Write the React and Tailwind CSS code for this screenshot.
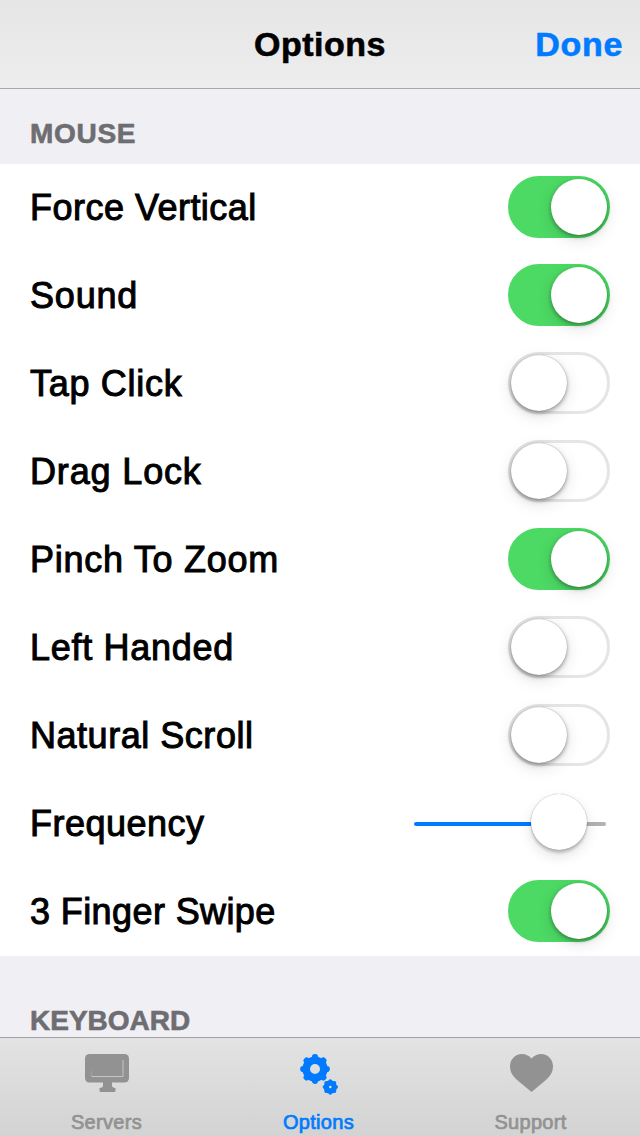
import { useState } from 'react';

const OPTIONS = [
  { id: 'forceVertical', label: 'Force Vertical', type: 'switch', tracking: 'tracking-[0.48px]' },
  { id: 'sound', label: 'Sound', type: 'switch', tracking: 'tracking-[0.8px]' },
  { id: 'tapClick', label: 'Tap Click', type: 'switch', tracking: 'tracking-[0.7px]' },
  { id: 'dragLock', label: 'Drag Lock', type: 'switch', tracking: 'tracking-[0.85px]' },
  { id: 'pinchToZoom', label: 'Pinch To Zoom', type: 'switch', tracking: 'tracking-[0.73px]' },
  { id: 'leftHanded', label: 'Left Handed', type: 'switch', tracking: 'tracking-[0.7px]' },
  { id: 'naturalScroll', label: 'Natural Scroll', type: 'switch', tracking: 'tracking-[0.53px]' },
  { id: 'frequency', label: 'Frequency', type: 'slider', tracking: 'tracking-[0.5px]' },
  { id: 'threeFingerSwipe', label: '3 Finger Swipe', type: 'switch', tracking: 'tracking-[0.4px]' },
];

const TEETH = [0, 45, 90, 135, 180, 225, 270, 315];

const MonitorIcon = () => (
  <svg width="44" height="38" viewBox="0 0 44 38" fill="currentColor">
    <rect width="44" height="28.5" rx="4.5" />
    <path d="M18 28h9v3.5q0 2 3.5 2.5v2.5q0 1.5-1.5 1.5H16q-1.500 0-1.500-1.500V34q3.500-.500 3.500-2.500z" />
    <path d="M6.500 17v5.500" fill="none" stroke="#a2a2a2" />
    <path d="M6.500 22.500H38V6" fill="none" stroke="#c4c4c4" />
  </svg>
);

const GearsIcon = () => (
  <svg width="40" height="42" viewBox="0 0 40 42" stroke="currentColor" fill="none" strokeLinecap="round">
    <circle cx="16" cy="15" r="8.800" strokeWidth="7.600" />
    {TEETH.map((a) => (
      <path key={a} d="M16 5.500V3.200" strokeWidth="6.200" transform={`rotate(${a} 16 15)`} />
    ))}
    <circle cx="31.300" cy="33" r="4" strokeWidth="5.400" />
    {TEETH.map((a) => (
      <path key={a} d="M31.300 28V27" strokeWidth="3.400" transform={`rotate(${a} 31.300 33)`} />
    ))}
  </svg>
);

const HeartIcon = () => (
  <svg width="43" height="38" viewBox="0 0 43 38" fill="currentColor">
    <path d="M21.500 4.500C24 1.500 27.500 0 31 0c7 0 12 5.500 12 12.500 0 5-2 8.500-5.500 12C33 29 27 33 21.500 38 16 33 10 29 5.500 24.500 2 21 0 17.500 0 12.500 0 5.500 5 0 12 0c3.500 0 7 1.500 9.500 4.500z" />
  </svg>
);

const TABS = [
  { id: 'servers', label: 'Servers', Icon: MonitorIcon },
  { id: 'options', label: 'Options', Icon: GearsIcon },
  { id: 'support', label: 'Support', Icon: HeartIcon },
];

const Switch = ({ on, label, onChange }) => (
  <button
    role="switch"
    aria-checked={on}
    aria-label={label}
    onClick={onChange}
    className={`flex h-[62px] w-[102px] items-center rounded-full border-[3px] ${
      on ? 'justify-end border-[#4cd964] bg-[#4cd964]' : 'justify-start border-[#e5e5e5] bg-white'
    }`}
  >
    <span
      className={`size-14 rounded-full bg-white ${
        on
          ? 'shadow-[0_2px_4px_rgba(0,0,0,0.35),0_5px_16px_rgba(0,0,0,0.12)]'
          : 'shadow-[0_2px_4px_rgba(0,0,0,0.35),0_0_1px_rgba(0,0,0,0.35),0_5px_16px_rgba(0,0,0,0.12)]'
      }`}
    />
  </button>
);

const Slider = ({ value }) => (
  <div className="mr-1 mb-0.5 flex w-48 items-center">
    <div className="mt-1 h-1 rounded-l-full bg-[#007aff]" style={{ width: `${value}%` }} />
    <div className="z-10 -mr-1 size-14 shrink-0 rounded-full bg-white shadow-[0_0_1px_rgba(0,0,0,0.4),0_3px_3px_rgba(0,0,0,0.2),0_6px_14px_rgba(0,0,0,0.12)]" />
    <div className="mt-1 h-1 grow rounded-r-full bg-[#b2b2b2]" />
  </div>
);

const SectionHeader = ({ children, className }) => (
  <h2
    className={`px-[30px] text-[28px] leading-8 font-bold text-[#6d6d72] [-webkit-text-stroke:0.6px_#6d6d72] ${className}`}
  >
    {children}
  </h2>
);

const App = () => {
  const [tab, setTab] = useState('options');
  const [values, setValues] = useState({
    forceVertical: true,
    sound: true,
    pinchToZoom: true,
    threeFingerSwipe: true,
    frequency: 61,
  });

  const toggle = (id) => setValues((v) => ({ ...v, [id]: !v[id] }));

  return (
    <div className="flex h-[1136px] w-[640px] flex-col overflow-hidden bg-[#efeff4] font-['Liberation_Sans',Arial,sans-serif] text-black">
      {/* Navigation bar */}
      <header className="grid h-[89px] shrink-0 grid-cols-3 items-center border-b border-[#a7a7aa] bg-linear-to-b from-[#e6e6e6] to-[#ededed] px-[17px] text-[34px] font-bold [-webkit-text-stroke:0.6px_currentColor]">
        <h1 className="col-start-2 text-center tracking-[0.5px]">Options</h1>
        <button className="justify-self-end tracking-[0.7px] text-[#007aff]">Done</button>
      </header>

      {/* Settings list */}
      <main className="min-h-0 grow overflow-hidden">
        <SectionHeader className="h-[75px] pt-[29px] tracking-[0.7px]">MOUSE</SectionHeader>
        <ul className="bg-white">
          {OPTIONS.map(({ id, label, type, tracking }) => (
            <li key={id} className="flex h-[88px] items-center justify-between px-[30px] pb-0.5">
              <span className={`pt-0.5 text-[36px] whitespace-nowrap [-webkit-text-stroke:1px_black] ${tracking}`}>
                {label}
              </span>
              {type === 'slider' ? (
                <Slider value={values[id]} />
              ) : (
                <Switch on={!!values[id]} label={label} onChange={() => toggle(id)} />
              )}
            </li>
          ))}
        </ul>
        <SectionHeader className="pt-[49px]">KEYBOARD</SectionHeader>
      </main>

      {/* Tab bar */}
      <nav className="h-[99px] shrink-0 border-t border-[#a0a0a5] bg-linear-to-b from-[#e3e3e3] to-[#d3d3d3]">
        <div className="ml-px grid h-full w-[636px] grid-cols-3">
          {TABS.map(({ id, label, Icon }) => (
            <button
              key={id}
              onClick={() => setTab(id)}
              className={`flex flex-col items-center pt-4 ${tab === id ? 'text-[#007aff]' : 'text-[#929292]'}`}
            >
              <span className="flex h-14 items-start">
                <Icon />
              </span>
              <span className="pr-px text-[20px] leading-6 tracking-[0.3px] [-webkit-text-stroke:0.7px_currentColor]">
                {label}
              </span>
            </button>
          ))}
        </div>
      </nav>
    </div>
  );
};

export default App;
